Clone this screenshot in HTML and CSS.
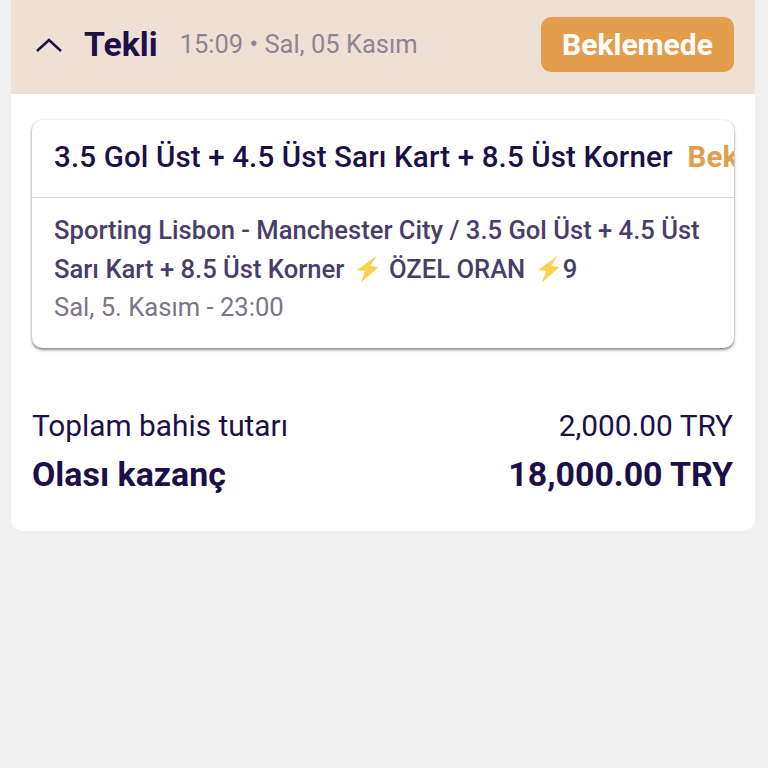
FILE: index.html
```html
<!DOCTYPE html>
<html lang="tr">

<head>
  <meta charset="UTF-8">
  <meta name="viewport" content="width=device-width, initial-scale=1.0">
  <title>Tekli</title>
  <link rel="stylesheet" href="styles.css">
</head>

<body>
  <div class="panel">
    <div class="head">
      <svg class="chevron" width="28" height="16" viewBox="0 0 28 16">
        <path d="M2 14 L14 3 L26 14" fill="none" stroke="#1f0c45" stroke-width="2.4" />
      </svg>
      <span class="type">Tekli</span>
      <span class="date">15:09 • Sal, 05 Kasım</span>
      <span class="status">Beklemede</span>
    </div>
    <div class="body">
      <div class="card">
        <div class="card-top">
          <span class="pick">3.5 Gol Üst + 4.5 Üst Sarı Kart + 8.5 Üst Korner</span>
          <span class="pick-status">Bek</span>
        </div>
        <div class="card-bottom">
          <p class="match">Sporting Lisbon - Manchester City / 3.5 Gol Üst + 4.5 Üst</p>
          <p class="match">Sarı Kart + 8.5 Üst Korner
            <svg class="bolt" width="32" height="28" viewBox="0 0 32 28">
              <path d="M26 0.5 L6 15 L14 16 L10 27.5 L27.5 12 L19 11 Z" fill="#fbd04e" />
            </svg>
            ÖZEL ORAN
            <svg class="bolt" width="32" height="28" viewBox="0 0 32 28">
              <path d="M26 0.5 L6 15 L14 16 L10 27.5 L27.5 12 L19 11 Z" fill="#fbd04e" />
            </svg><span class="odd">9</span></p>
          <p class="when">Sal, 5. Kasım - 23:00</p>
        </div>
      </div>
      <div class="row total">
        <span>Toplam bahis tutarı</span>
        <span>2,000.00 TRY</span>
      </div>
      <div class="row win">
        <span>Olası kazanç</span>
        <span>18,000.00 TRY</span>
      </div>
    </div>
  </div>
</body>

</html>
```

FILE: styles.css
```css
html,
body {
  margin: 0;
  padding: 0;
}

body {
  min-height: 768px;
  background-color: #f0f0f0;
  font-family: Roboto, "Liberation Sans", sans-serif;
  color: #1d0f48;
}

p {
  margin: 0;
}

.panel {
  width: 744px;
  margin-left: 11px;
  background-color: #fff;
  border-radius: 0 0 12px 12px;
}

.head {
  display: flex;
  align-items: center;
  height: 94px;
  box-sizing: border-box;
  padding: 0 21px 5px 24px;
  background-color: #efe0d5;
}

.chevron {
  flex: none;
  margin-right: 21px;
}

.type {
  font-size: 33.8px;
  font-weight: 700;
  margin-right: 22px;
}

.date {
  font-size: 25.5px;
  line-height: 28px;
  padding-bottom: 2px;
  color: #908394;
}

.status {
  margin-left: auto;
  width: 193px;
  height: 55px;
  line-height: 55px;
  text-align: center;
  border-radius: 10px;
  background-color: #e39d4b;
  color: #fff;
  font-size: 30px;
  font-weight: 700;
}

.body {
  padding: 26px 21px 35px;
}

.card {
  border-radius: 10px;
  background-color: #fff;
  box-shadow: 0 2px 3px rgba(0, 0, 0, 0.45), 0 0 2px rgba(0, 0, 0, 0.15);
  overflow: hidden;
}

.card-top {
  display: flex;
  align-items: center;
  height: 78px;
  box-sizing: border-box;
  padding: 0 0 3px 22px;
  border-bottom: 1px solid #dcdcdc;
  white-space: nowrap;
  overflow: hidden;
  font-size: 29.5px;
  letter-spacing: 0.15px;
}

.pick {
  color: #1c0f47;
  font-weight: 500;
}

.pick-status {
  margin-left: 15px;
  color: #e09e50;
  font-weight: 700;
}

.card-bottom {
  padding: 13px 22px 20px;
  font-size: 25.6px;
  line-height: 38.5px;
  color: #493d69;
}

.match {
  font-weight: 500;
}

.bolt {
  vertical-align: -5px;
}

.odd {
  margin-left: -1px;
}

.when {
  color: #7c7488;
  font-size: 25.6px;
  line-height: 39.5px;
}

.row {
  display: flex;
  justify-content: space-between;
  padding-right: 1px;
}

.total {
  margin-top: 58px;
  font-size: 29.8px;
  line-height: 40px;
}

.win {
  margin-top: 8px;
  font-size: 33.9px;
  line-height: 42px;
  font-weight: 700;
}
```
